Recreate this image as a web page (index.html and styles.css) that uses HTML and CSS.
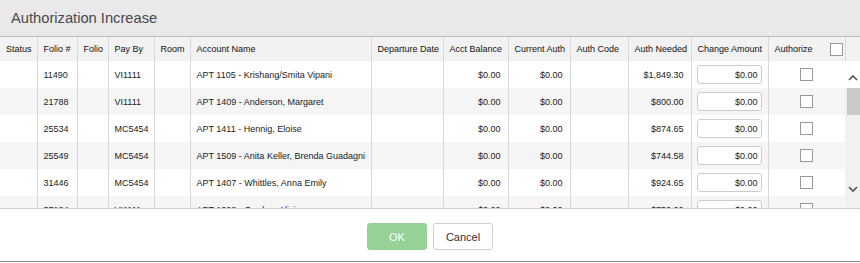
FILE: index.html
```html
<!DOCTYPE html>
<html lang="en">
<head>
    <meta charset="UTF-8">
    <title>Authorization Increase</title>
    <link rel="stylesheet" href="styles.css">
</head>
<body>

    <div class="dialog">
        <div class="dialog-title">Authorization Increase</div>

        <table class="grid-head">
            <colgroup>
                <col class="c-status"><col class="c-folio-no"><col class="c-folio"><col class="c-payby">
                <col class="c-room"><col class="c-name"><col class="c-dep"><col class="c-bal">
                <col class="c-cur"><col class="c-code"><col class="c-need"><col class="c-change">
                <col class="c-auth"><col class="c-scroll">
            </colgroup>
            <tr>
                <th>Status</th>
                <th>Folio #</th>
                <th>Folio</th>
                <th>Pay By</th>
                <th>Room</th>
                <th>Account Name</th>
                <th>Departure Date</th>
                <th>Acct Balance</th>
                <th>Current Auth</th>
                <th>Auth Code</th>
                <th>Auth Needed</th>
                <th>Change Amount</th>
                <th class="auth-cell"><div class="auth-head"><span>Authorize</span><span class="box"></span></div></th>
                <th class="scroll-head"></th>
            </tr>
        </table>

        <div class="grid-body">
            <div class="rows">
                <table class="grid-rows">
                    <colgroup>
                        <col class="c-status"><col class="c-folio-no"><col class="c-folio"><col class="c-payby">
                        <col class="c-room"><col class="c-name"><col class="c-dep"><col class="c-bal">
                        <col class="c-cur"><col class="c-code"><col class="c-need"><col class="c-change">
                        <col class="c-auth">
                    </colgroup>
                    <tr>
                        <td></td><td>11490</td><td></td><td>VI1111</td><td></td>
                        <td>APT 1105 - Krishang/Smita Vipani</td><td></td>
                        <td class="num">$0.00</td><td class="num">$0.00</td><td></td>
                        <td class="num">$1,849.30</td>
                        <td class="change"><div class="amount">$0.00</div></td>
                        <td class="check"><span class="box"></span></td>
                    </tr>
                    <tr>
                        <td></td><td>21788</td><td></td><td>VI1111</td><td></td>
                        <td>APT 1409 - Anderson, Margaret</td><td></td>
                        <td class="num">$0.00</td><td class="num">$0.00</td><td></td>
                        <td class="num">$800.00</td>
                        <td class="change"><div class="amount">$0.00</div></td>
                        <td class="check"><span class="box"></span></td>
                    </tr>
                    <tr>
                        <td></td><td>25534</td><td></td><td>MC5454</td><td></td>
                        <td>APT 1411 - Hennig, Eloise</td><td></td>
                        <td class="num">$0.00</td><td class="num">$0.00</td><td></td>
                        <td class="num">$874.65</td>
                        <td class="change"><div class="amount">$0.00</div></td>
                        <td class="check"><span class="box"></span></td>
                    </tr>
                    <tr>
                        <td></td><td>25549</td><td></td><td>MC5454</td><td></td>
                        <td>APT 1509 - Anita Keller, Brenda Guadagni</td><td></td>
                        <td class="num">$0.00</td><td class="num">$0.00</td><td></td>
                        <td class="num">$744.58</td>
                        <td class="change"><div class="amount">$0.00</div></td>
                        <td class="check"><span class="box"></span></td>
                    </tr>
                    <tr>
                        <td></td><td>31446</td><td></td><td>MC5454</td><td></td>
                        <td>APT 1407 - Whittles, Anna Emily</td><td></td>
                        <td class="num">$0.00</td><td class="num">$0.00</td><td></td>
                        <td class="num">$924.65</td>
                        <td class="change"><div class="amount">$0.00</div></td>
                        <td class="check"><span class="box"></span></td>
                    </tr>
                    <tr>
                        <td></td><td>37184</td><td></td><td>VI1111</td><td></td>
                        <td>APT 1308 - Gordon, Alicia</td><td></td>
                        <td class="num">$0.00</td><td class="num">$0.00</td><td></td>
                        <td class="num">$750.00</td>
                        <td class="change"><div class="amount">$0.00</div></td>
                        <td class="check"><span class="box"></span></td>
                    </tr>
                </table>
            </div>

            <div class="scrollbar">
                <div class="scroll-up">
                    <svg width="10" height="7" viewBox="0 0 10 7"><path d="M1 6 L5 2 L9 6" fill="none" stroke="#555" stroke-width="1.6"/></svg>
                </div>
                <div class="scroll-thumb"></div>
                <div class="scroll-track">
                    <svg width="10" height="7" viewBox="0 0 10 7"><path d="M1 1 L5 5 L9 1" fill="none" stroke="#555" stroke-width="1.6"/></svg>
                </div>
            </div>
        </div>

        <div class="dialog-footer">
            <button class="btn btn-ok">OK</button>
            <button class="btn btn-cancel">Cancel</button>
        </div>
    </div>

</body>
</html>
```

FILE: styles.css
```css
:root {
    --text: #222;
    --line: #d8d8d8;
    --alt: #f5f5f5;
}

body {
    font-family: 'Liberation Sans', Arial, sans-serif;
    color: var(--text);
    margin: 0;
    background: white;
}

.dialog {
    width: 860px;
    height: 262px;
    border-bottom: 1px solid #8a8a8a;
    box-sizing: border-box;
    display: flex;
    flex-direction: column;
    background: white;
}

.dialog-title {
    height: 37px;
    box-sizing: border-box;
    background: #e9e8ea;
    border-bottom: 1px solid #bcbcbc;
    padding: 0 11px;
    display: flex;
    align-items: center;
    font-size: 14.7px;
    color: #4a4a4a;
}

table {
    border-collapse: collapse;
    table-layout: fixed;
}

.grid-head {
    width: 860px;
    background: #f2f2f2;
}

.grid-rows {
    width: 845px;
}

.c-status { width: 37px; }
.c-folio-no { width: 40px; }
.c-folio { width: 31px; }
.c-payby { width: 46px; }
.c-room { width: 36px; }
.c-name { width: 181px; }
.c-dep { width: 72px; }
.c-bal { width: 65px; }
.c-cur { width: 62px; }
.c-code { width: 58px; }
.c-need { width: 63px; }
.c-change { width: 77px; }
.c-auth { width: 77px; }
.c-scroll { width: 15px; }

th, td {
    font-size: 9px;
    font-weight: normal;
    text-align: left;
    padding: 0 6px;
    border-right: 1px solid var(--line);
    white-space: nowrap;
    overflow: hidden;
}

th {
    height: 24px;
    color: #111;
}

th.scroll-head {
    border-right: none;
    padding: 0;
}

th.auth-cell {
    padding-right: 2px;
}

.auth-head {
    display: flex;
    align-items: center;
    justify-content: space-between;
}

td {
    height: 27px;
}

tr:nth-child(even) td {
    background: var(--alt);
}

td.num {
    text-align: right;
    padding-right: 7px;
}

td.change {
    padding: 0 6px 0 5px;
}

.amount {
    height: 19px;
    box-sizing: border-box;
    border: 1px solid #ccc;
    border-radius: 3px;
    background: white;
    text-align: right;
    padding: 1px 3px 0;
    line-height: 17px;
}

td.check {
    text-align: center;
}

.box {
    display: inline-block;
    width: 11px;
    height: 11px;
    border: 1px solid #999;
    background: white;
    vertical-align: middle;
}

.grid-body {
    height: 147px;
    display: flex;
    overflow: hidden;
}

.rows {
    width: 845px;
    overflow: hidden;
}

.scrollbar {
    width: 15px;
    display: flex;
    flex-direction: column;
    background: #f1f1f1;
}

.scroll-up {
    height: 27px;
    background: white;
    display: flex;
    align-items: flex-end;
    justify-content: center;
    padding-bottom: 7px;
    box-sizing: border-box;
}

.scroll-thumb {
    height: 27px;
    margin-left: 2px;
    background: #c9c9c9;
}

.scroll-track {
    flex: 1;
    display: flex;
    align-items: flex-end;
    justify-content: center;
    padding-bottom: 15px;
}

.dialog-footer {
    flex: 1;
    border-top: 1px solid #d0d0d0;
    display: flex;
    justify-content: center;
    align-items: flex-start;
    gap: 6px;
    padding-top: 14px;
}

.btn {
    width: 60px;
    height: 27px;
    border-radius: 3px;
    font-family: 'Liberation Sans', Arial, sans-serif;
    font-size: 11px;
    cursor: pointer;
}

.btn-ok {
    background: #96d196;
    border: 1px solid #96d196;
    color: white;
}

.btn-cancel {
    background: white;
    border: 1px solid #cfcfcf;
    color: #333;
}
```
